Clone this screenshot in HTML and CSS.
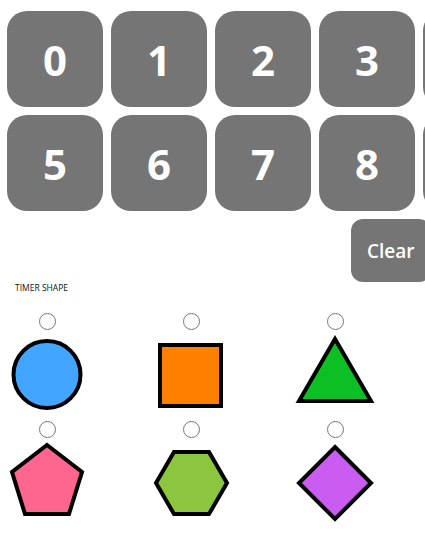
FILE: index.html
```html
<!DOCTYPE html>
<html lang="en">
<head>
    <meta charset="UTF-8">
    <meta name="viewport" content="width=device-width, initial-scale=1.0">
    <title>Timer Setup</title>
    <link rel="stylesheet" href="styles.css">
</head>
<body>
    <div class="page">
        <!-- Number pad -->
        <div class="keypad">
            <button class="key">0</button>
            <button class="key">1</button>
            <button class="key">2</button>
            <button class="key">3</button>
            <button class="key">4</button>
            <button class="key">5</button>
            <button class="key">6</button>
            <button class="key">7</button>
            <button class="key">8</button>
            <button class="key">9</button>
        </div>
        <div class="clear-row">
            <button class="clear-btn">Clear</button>
        </div>

        <!-- Timer shape picker -->
        <div class="section-label">TIMER SHAPE</div>
        <div class="shapes">
            <label class="shape-option">
                <input type="radio" name="shape" value="circle">
                <svg class="shape" viewBox="0 0 88 88" width="88" height="88">
                    <circle cx="44" cy="43.5" r="33.5" fill="#42a5ff" stroke="#000" stroke-width="4"/>
                </svg>
            </label>
            <label class="shape-option">
                <input type="radio" name="shape" value="square">
                <svg class="shape" viewBox="0 0 88 88" width="88" height="88">
                    <rect x="13" y="14" width="61" height="61" fill="#ff8000" stroke="#000" stroke-width="4"/>
                </svg>
            </label>
            <label class="shape-option">
                <input type="radio" name="shape" value="triangle">
                <svg class="shape" viewBox="0 0 88 88" width="88" height="88">
                    <polygon points="44,8 8,70 80,70" fill="#0cbf22" stroke="#000" stroke-width="4"/>
                </svg>
            </label>
            <label class="shape-option">
                <input type="radio" name="shape" value="pentagon">
                <svg class="shape" viewBox="0 0 88 88" width="88" height="88">
                    <polygon points="44,6 79,33 66,75 22,75 9,33" fill="#ff668f" stroke="#000" stroke-width="4"/>
                </svg>
            </label>
            <label class="shape-option">
                <input type="radio" name="shape" value="hexagon">
                <svg class="shape" viewBox="0 0 88 88" width="88" height="88">
                    <polygon points="9,44 27,13 62,13 80,44 62,75 27,75" fill="#8cc63f" stroke="#000" stroke-width="4"/>
                </svg>
            </label>
            <label class="shape-option">
                <input type="radio" name="shape" value="diamond">
                <svg class="shape" viewBox="0 0 88 88" width="88" height="88">
                    <polygon points="44,8 80,44 44,80 8,44" fill="#cb5cf2" stroke="#000" stroke-width="4"/>
                </svg>
            </label>
        </div>
    </div>
</body>
</html>
```

FILE: styles.css
```css
/* Timer setup page */
body {
    margin: 0;
    padding: 0;
    background: #fff;
    font-family: "Open Sans", Arial, sans-serif;
    overflow: hidden;
}
.page {
    padding: 11px 0 0 7px;
}
.keypad {
    display: grid;
    grid-template-columns: repeat(5, 96px);
    gap: 8px;
    width: 512px;
}
.key, .clear-btn {
    border: none;
    background-color: #757575;
    color: #fff;
    font-family: "Open Sans", Arial, sans-serif;
    cursor: pointer;
}
.key {
    height: 96px;
    border-radius: 20px;
    font-size: 42px;
    font-weight: 700;
    padding: 0;
}
.clear-row {
    margin-top: 8px;
    padding-left: 344px;
}
.clear-btn {
    height: 63px;
    padding: 0 16px;
    border-radius: 12px;
    font-size: 19px;
    font-weight: 600;
}
.section-label {
    margin: 0 0 0 8px;
    font-size: 8.5px;
    line-height: 12px;
    color: #111;
}
.shapes {
    display: grid;
    grid-template-columns: repeat(3, 88px);
    column-gap: 56px;
    row-gap: 2px;
    margin: 19px 0 0 -4px;
}
.shape-option {
    display: flex;
    flex-direction: column;
    align-items: center;
    cursor: pointer;
}
.shape-option input {
    appearance: none;
    width: 17px;
    height: 17px;
    margin: 0;
    border: 1px solid #767676;
    border-radius: 50%;
    background: #fff;
}
.shape {
    display: block;
    margin-top: 1px;
}
```
